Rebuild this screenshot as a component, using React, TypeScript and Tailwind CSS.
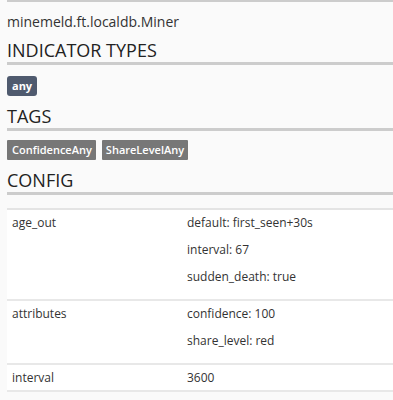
import React from 'react';

const font = { fontFamily: '"Open Sans", "Noto Sans", sans-serif' };

const Section: React.FC<{ title: string; first?: boolean; children?: React.ReactNode }> = ({ title, first, children }) => (
  <div>
    <h2
      className={
        'text-[18px] leading-[24px] text-[#222] border-b-[3px] border-[#cccccc] ' +
        (first ? 'mt-[6px]' : 'mt-[8px]')
      }
    >
      {title}
    </h2>
    {children}
  </div>
);

const rows: { key: string; values: string[] }[] = [
  { key: 'age_out', values: ['default: first_seen+30s', 'interval: 67', 'sudden_death: true'] },
  { key: 'attributes', values: ['confidence: 100', 'share_level: red'] },
  { key: 'interval', values: ['3600'] },
];

export default function App() {
  return (
    <div className="w-[393px] h-[400px] overflow-hidden bg-[#fafafa] pl-[7px]" style={font}>
      <div className="border-t-[2px] border-[#cccccc] h-0" />
      {/* Node class */}
      <div className="text-[14px] leading-[21px] text-[#333] pt-[9px]">minemeld.ft.localdb.Miner</div>

      <Section title="INDICATOR TYPES" first>
        <div className="flex gap-[5px] mt-[11px]">
          <span className="bg-[#4f5a6e] text-white text-[11px] font-bold leading-[20px] px-[5px] rounded-[3px]">any</span>
        </div>
      </Section>

      <Section title="TAGS">
        <div className="flex gap-[6px] mt-[9px]">
          <span className="bg-[#777777] text-white text-[11px] font-semibold leading-[20px] pl-[5px] pr-[4px] rounded-[1px]">ConfidenceAny</span>
          <span className="bg-[#777777] text-white text-[11px] font-semibold leading-[20px] px-[4px] rounded-[1px]">ShareLevelAny</span>
        </div>
      </Section>

      <Section title="CONFIG">
        <table className="w-full bg-white mt-[13px] text-[12px] text-[#333] border-t-2 border-[#e4e4e4]">
          <tbody>
            {rows.map(r => (
              <tr key={r.key} className="border-b-2 border-[#e8e8e8] align-top">
                <td className="w-[180px] pl-[5px] pt-[4px] pb-[4px] leading-[17px]">{r.key}</td>
                <td className="pt-[4px] pb-[4px] leading-[17px]">
                  {r.values.length > 1 ? (
                    r.values.map(v => (
                      <div key={v} className="mb-[10px]">{v}</div>
                    ))
                  ) : (
                    r.values[0]
                  )}
                </td>
              </tr>
            ))}
          </tbody>
        </table>
      </Section>
    </div>
  );
}
